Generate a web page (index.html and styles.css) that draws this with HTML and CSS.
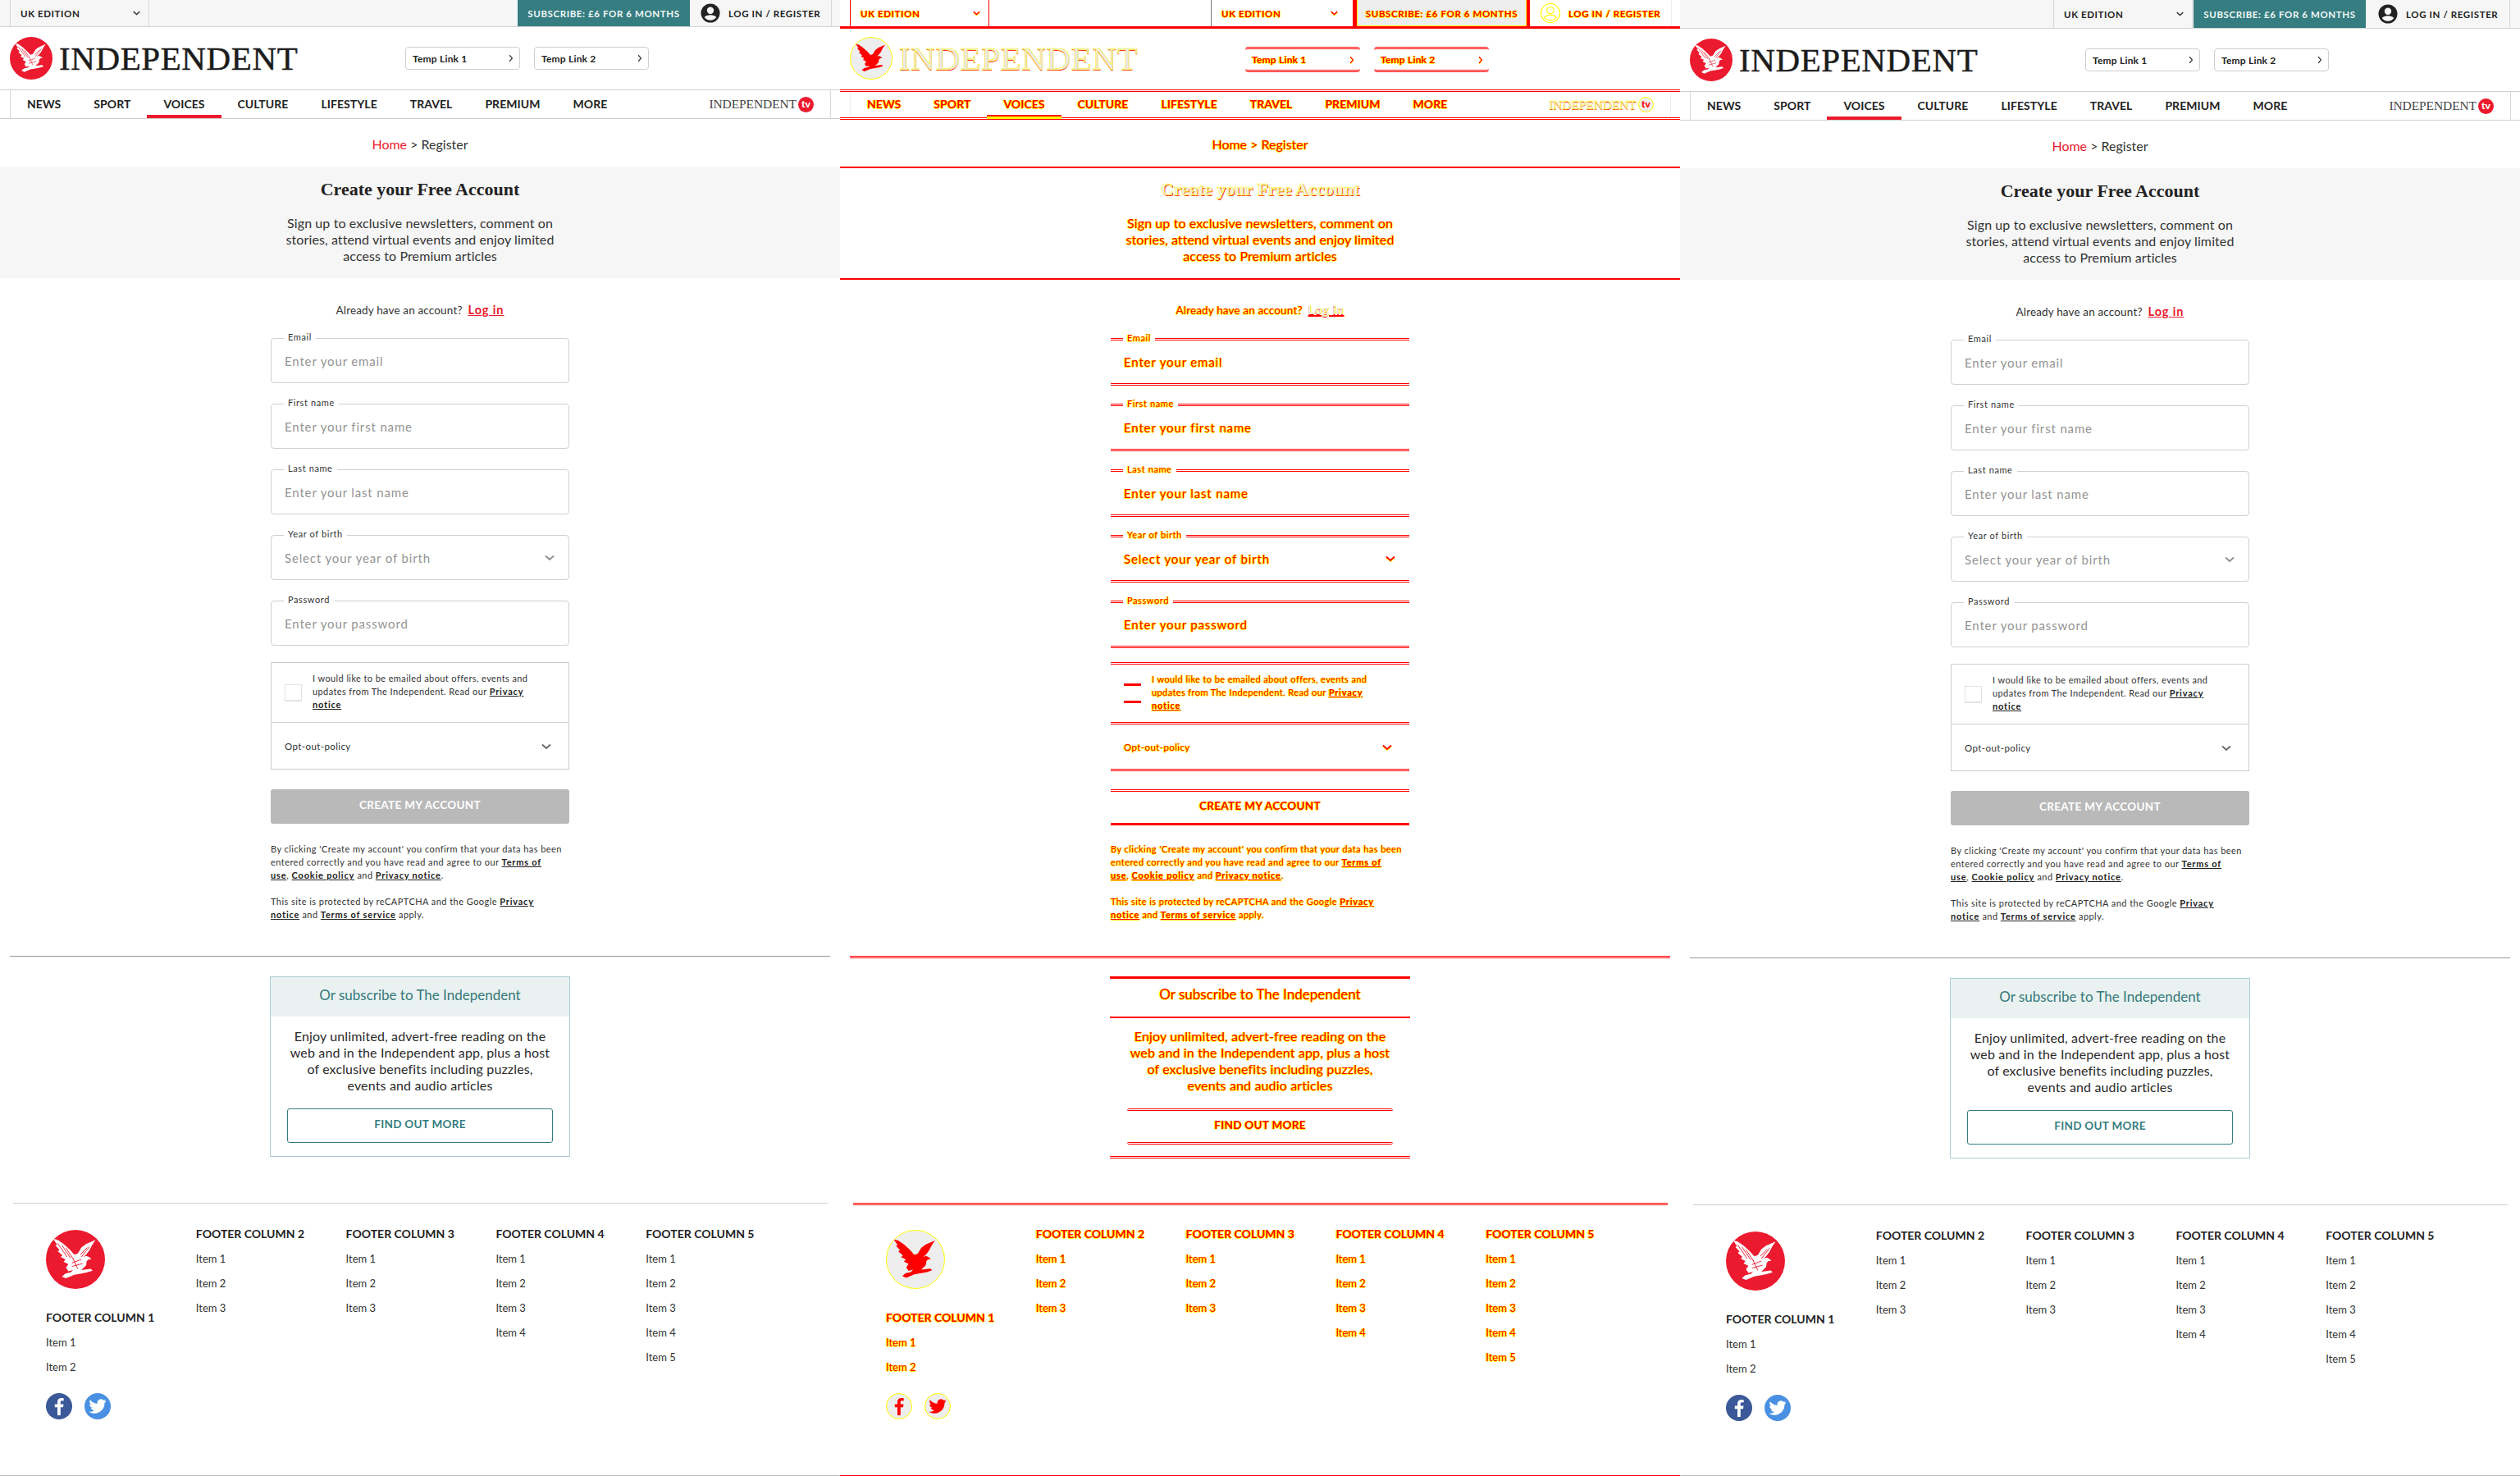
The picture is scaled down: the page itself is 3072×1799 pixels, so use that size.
FILE: index.html
```html
<!DOCTYPE html>
<html lang="en">
<head>
<meta charset="utf-8">
<title>Independent register page comparison</title>
<link rel="stylesheet" href="styles.css">
</head>
<body>
<svg class="sprites" width="0" height="0" aria-hidden="true">
  <symbol id="eagle" viewBox="0 0 100 100">
    <path class="eagle-body" d="M12 15 L20 17 L30 24 L40 33 L48 42 L54 40 L60 30 L68 24 L84 17 L78 26 L74 34 L68 42 L63 46 L68 44 L73 46 L77 50 L72 50 L69 53 L68 60 L62 66 L60 68 L76 66 L79 69 L70 72 L60 74 L48 76 L34 82 L27 79 L33 74 L42 72 L46 68 L38 70 L34 64 L38 58 L30 54 L33 50 L25 46 L28 43 L20 36 L23 34 L16 26 L19 25 Z"/>
    <path class="eagle-hatch" d="M20 23 L36 46 M27 26 L42 48 M34 31 L47 50 M74 28 L60 46 M70 30 L58 42 M44 56 L60 50 M44 62 L62 57 M46 49 L54 66"/>
  </symbol>
  <symbol id="avatar" viewBox="0 0 24 24">
    <path d="M12 .5a11.500 11.500 0 1 0 0 23 11.500 11.500 0 0 0 0-23zm0 4a4.200 4.200 0 1 1 0 8.400 4.200 4.200 0 0 1 0-8.400zm0 16.300c-3 0-5.700-1.500-7.300-3.800 1.300-1.800 4.500-2.700 7.300-2.700s6 .9 7.300 2.700c-1.600 2.300-4.300 3.800-7.300 3.800z" fill-rule="evenodd"/>
  </symbol>
  <symbol id="chev-down" viewBox="0 0 12 8"><path d="M1 1.500 L6 6 L11 1.500" fill="none" stroke="currentColor" stroke-width="1.800"/></symbol>
  <symbol id="chev-right" viewBox="0 0 8 12"><path d="M1.500 1 L6 6 L1.500 11" fill="none" stroke="currentColor" stroke-width="1.500"/></symbol>
  <symbol id="fb" viewBox="0 0 32 32"><path d="M17.800 27V17.200h3.200l.5-3.800h-3.700v-2.400c0-1.100.3-1.800 1.900-1.800h2V6.200c-.4 0-1.500-.2-2.900-.2-2.900 0-4.800 1.700-4.800 4.900v2.500h-3.200v3.800H14V27z"/></symbol>
  <symbol id="tw" viewBox="-5 -6 34 36"><path d="M23.953 4.570a10 10 0 0 1-2.825.775 4.958 4.958 0 0 0 2.163-2.723c-.951.555-2.005.959-3.127 1.184a4.920 4.920 0 0 0-8.384 4.482C7.690 8.095 4.067 6.130 1.640 3.162a4.822 4.822 0 0 0-.666 2.475c0 1.710.870 3.213 2.188 4.096a4.904 4.904 0 0 1-2.228-.616v.06a4.923 4.923 0 0 0 3.946 4.827 4.996 4.996 0 0 1-2.212.085 4.936 4.936 0 0 0 4.604 3.417 9.867 9.867 0 0 1-6.102 2.105c-.39 0-.779-.023-1.170-.067a13.995 13.995 0 0 0 7.557 2.209c9.053 0 13.998-7.496 13.998-13.985 0-.21 0-.42-.015-.63A9.935 9.935 0 0 0 24 4.590z"/></symbol>
</svg>

<div class="stage">

<!-- BEFORE -->
<section class="panel panel-a">
  <div class="topbar">
    <div class="edition"><span>UK EDITION</span><svg class="ico-down"><use href="#chev-down"/></svg></div>
    <a class="subscribe">SUBSCRIBE: £6 FOR 6 MONTHS</a>
    <div class="login"><svg class="avatar"><use href="#avatar"/></svg><span>LOG IN / REGISTER</span></div>
  </div>
  <header class="masthead">
    <svg class="logo-disc"><use href="#eagle"/></svg>
    <div class="wordmark">INDEPENDENT</div>
    <div class="temp-links">
      <a class="temp-link"><span>Temp Link 1</span><svg class="ico-right"><use href="#chev-right"/></svg></a>
      <a class="temp-link"><span>Temp Link 2</span><svg class="ico-right"><use href="#chev-right"/></svg></a>
    </div>
  </header>
  <nav class="nav"><div class="nav-inner">
    <a class="nav-item">NEWS</a><a class="nav-item">SPORT</a><a class="nav-item active">VOICES</a><a class="nav-item">CULTURE</a><a class="nav-item">LIFESTYLE</a><a class="nav-item">TRAVEL</a><a class="nav-item">PREMIUM</a><a class="nav-item">MORE</a>
    <div class="tv"><span class="tv-word">INDEPENDENT</span><span class="tv-badge">tv</span></div>
  </div></nav>
  <div class="crumb"><a class="crumb-home">Home</a>&nbsp;&gt; Register</div>
  <div class="hero">
    <h1>Create your Free Account</h1>
    <p>Sign up to exclusive newsletters, comment on<br>stories, attend virtual events and enjoy limited<br>access to Premium articles</p>
  </div>
  <main class="form">
    <div class="already">Already have an account?<a class="login-link">Log in</a></div>
    <div class="field"><label>Email</label><span class="ph">Enter your email</span></div>
    <div class="field"><label>First name</label><span class="ph">Enter your first name</span></div>
    <div class="field"><label>Last name</label><span class="ph">Enter your last name</span></div>
    <div class="field"><label>Year of birth</label><span class="ph">Select your year of birth</span><svg class="ico-down field-chev"><use href="#chev-down"/></svg></div>
    <div class="field"><label>Password</label><span class="ph">Enter your password</span></div>
    <div class="consent">
      <div class="consent-row"><span class="checkbox"></span><p>I would like to be emailed about offers, events and<br>updates from The Independent. Read our <a>Privacy</a><br><a>notice</a></p></div>
      <div class="opt-row"><span>Opt-out-policy</span><svg class="ico-down"><use href="#chev-down"/></svg></div>
    </div>
    <button class="create">CREATE MY ACCOUNT</button>
    <div class="legal">
      <p>By clicking 'Create my account' you confirm that your data has been<br>entered correctly and you have read and agree to our <a>Terms of</a><br><a>use</a>, <a>Cookie policy</a> and <a>Privacy notice</a>.</p>
      <p>This site is protected by reCAPTCHA and the Google <a>Privacy</a><br><a>notice</a> and <a>Terms of service</a> apply.</p>
    </div>
  </main>
  <hr class="rule">
  <aside class="sub-box">
    <div class="sub-head">Or subscribe to The Independent</div>
    <p>Enjoy unlimited, advert-free reading on the<br>web and in the Independent app, plus a host<br>of exclusive benefits including puzzles,<br>events and audio articles</p>
    <a class="find">FIND OUT MORE</a>
  </aside>
  <footer class="footer">
    <div class="fcol fcol-first">
      <svg class="foot-disc"><use href="#eagle"/></svg>
      <h4>FOOTER COLUMN 1</h4><a>Item 1</a><a>Item 2</a>
      <div class="social"><span class="soc soc-fb"><svg><use href="#fb"/></svg></span><span class="soc soc-tw"><svg><use href="#tw"/></svg></span></div>
    </div>
    <div class="fcol"><h4>FOOTER COLUMN 2</h4><a>Item 1</a><a>Item 2</a><a>Item 3</a></div>
    <div class="fcol"><h4>FOOTER COLUMN 3</h4><a>Item 1</a><a>Item 2</a><a>Item 3</a></div>
    <div class="fcol"><h4>FOOTER COLUMN 4</h4><a>Item 1</a><a>Item 2</a><a>Item 3</a><a>Item 4</a></div>
    <div class="fcol"><h4>FOOTER COLUMN 5</h4><a>Item 1</a><a>Item 2</a><a>Item 3</a><a>Item 4</a><a>Item 5</a></div>
  </footer>
  <div class="page-end"></div>
</section>

<!-- DIFF -->
<section class="panel panel-diff">
  <div class="topbar">
    <div class="edition"><span>UK EDITION</span><svg class="ico-down"><use href="#chev-down"/></svg></div>
    <div class="edition edition-2"><span>UK EDITION</span><svg class="ico-down"><use href="#chev-down"/></svg></div>
    <a class="subscribe">SUBSCRIBE: £6 FOR 6 MONTHS</a>
    <div class="login"><svg class="avatar"><use href="#avatar"/></svg><span>LOG IN / REGISTER</span></div>
  </div>
  <header class="masthead">
    <svg class="logo-disc"><use href="#eagle"/></svg>
    <div class="wordmark">INDEPENDENT</div>
    <div class="temp-links">
      <a class="temp-link"><span>Temp Link 1</span><svg class="ico-right"><use href="#chev-right"/></svg></a>
      <a class="temp-link"><span>Temp Link 2</span><svg class="ico-right"><use href="#chev-right"/></svg></a>
    </div>
  </header>
  <nav class="nav"><div class="nav-inner">
    <a class="nav-item">NEWS</a><a class="nav-item">SPORT</a><a class="nav-item active">VOICES</a><a class="nav-item">CULTURE</a><a class="nav-item">LIFESTYLE</a><a class="nav-item">TRAVEL</a><a class="nav-item">PREMIUM</a><a class="nav-item">MORE</a>
    <div class="tv"><span class="tv-word">INDEPENDENT</span><span class="tv-badge">tv</span></div>
  </div></nav>
  <div class="crumb"><a class="crumb-home">Home</a>&nbsp;&gt; Register</div>
  <div class="hero">
    <h1>Create your Free Account</h1>
    <p>Sign up to exclusive newsletters, comment on<br>stories, attend virtual events and enjoy limited<br>access to Premium articles</p>
  </div>
  <main class="form">
    <div class="already">Already have an account?<a class="login-link">Log in</a></div>
    <div class="field"><label>Email</label><span class="ph">Enter your email</span></div>
    <div class="field"><label>First name</label><span class="ph">Enter your first name</span></div>
    <div class="field"><label>Last name</label><span class="ph">Enter your last name</span></div>
    <div class="field"><label>Year of birth</label><span class="ph">Select your year of birth</span><svg class="ico-down field-chev"><use href="#chev-down"/></svg></div>
    <div class="field"><label>Password</label><span class="ph">Enter your password</span></div>
    <div class="consent">
      <div class="consent-row"><span class="checkbox"></span><p>I would like to be emailed about offers, events and<br>updates from The Independent. Read our <a>Privacy</a><br><a>notice</a></p></div>
      <div class="opt-row"><span>Opt-out-policy</span><svg class="ico-down"><use href="#chev-down"/></svg></div>
    </div>
    <button class="create">CREATE MY ACCOUNT</button>
    <div class="legal">
      <p>By clicking 'Create my account' you confirm that your data has been<br>entered correctly and you have read and agree to our <a>Terms of</a><br><a>use</a>, <a>Cookie policy</a> and <a>Privacy notice</a>.</p>
      <p>This site is protected by reCAPTCHA and the Google <a>Privacy</a><br><a>notice</a> and <a>Terms of service</a> apply.</p>
    </div>
  </main>
  <hr class="rule">
  <aside class="sub-box">
    <div class="sub-head">Or subscribe to The Independent</div>
    <p>Enjoy unlimited, advert-free reading on the<br>web and in the Independent app, plus a host<br>of exclusive benefits including puzzles,<br>events and audio articles</p>
    <a class="find">FIND OUT MORE</a>
  </aside>
  <footer class="footer">
    <div class="fcol fcol-first">
      <svg class="foot-disc"><use href="#eagle"/></svg>
      <h4>FOOTER COLUMN 1</h4><a>Item 1</a><a>Item 2</a>
      <div class="social"><span class="soc soc-fb"><svg><use href="#fb"/></svg></span><span class="soc soc-tw"><svg><use href="#tw"/></svg></span></div>
    </div>
    <div class="fcol"><h4>FOOTER COLUMN 2</h4><a>Item 1</a><a>Item 2</a><a>Item 3</a></div>
    <div class="fcol"><h4>FOOTER COLUMN 3</h4><a>Item 1</a><a>Item 2</a><a>Item 3</a></div>
    <div class="fcol"><h4>FOOTER COLUMN 4</h4><a>Item 1</a><a>Item 2</a><a>Item 3</a><a>Item 4</a></div>
    <div class="fcol"><h4>FOOTER COLUMN 5</h4><a>Item 1</a><a>Item 2</a><a>Item 3</a><a>Item 4</a><a>Item 5</a></div>
  </footer>
  <div class="page-end"></div>
</section>

<!-- AFTER -->
<section class="panel panel-b">
  <div class="topbar">
    <div class="edition"><span>UK EDITION</span><svg class="ico-down"><use href="#chev-down"/></svg></div>
    <a class="subscribe">SUBSCRIBE: £6 FOR 6 MONTHS</a>
    <div class="login"><svg class="avatar"><use href="#avatar"/></svg><span>LOG IN / REGISTER</span></div>
  </div>
  <header class="masthead">
    <svg class="logo-disc"><use href="#eagle"/></svg>
    <div class="wordmark">INDEPENDENT</div>
    <div class="temp-links">
      <a class="temp-link"><span>Temp Link 1</span><svg class="ico-right"><use href="#chev-right"/></svg></a>
      <a class="temp-link"><span>Temp Link 2</span><svg class="ico-right"><use href="#chev-right"/></svg></a>
    </div>
  </header>
  <nav class="nav"><div class="nav-inner">
    <a class="nav-item">NEWS</a><a class="nav-item">SPORT</a><a class="nav-item active">VOICES</a><a class="nav-item">CULTURE</a><a class="nav-item">LIFESTYLE</a><a class="nav-item">TRAVEL</a><a class="nav-item">PREMIUM</a><a class="nav-item">MORE</a>
    <div class="tv"><span class="tv-word">INDEPENDENT</span><span class="tv-badge">tv</span></div>
  </div></nav>
  <div class="crumb"><a class="crumb-home">Home</a>&nbsp;&gt; Register</div>
  <div class="hero">
    <h1>Create your Free Account</h1>
    <p>Sign up to exclusive newsletters, comment on<br>stories, attend virtual events and enjoy limited<br>access to Premium articles</p>
  </div>
  <main class="form">
    <div class="already">Already have an account?<a class="login-link">Log in</a></div>
    <div class="field"><label>Email</label><span class="ph">Enter your email</span></div>
    <div class="field"><label>First name</label><span class="ph">Enter your first name</span></div>
    <div class="field"><label>Last name</label><span class="ph">Enter your last name</span></div>
    <div class="field"><label>Year of birth</label><span class="ph">Select your year of birth</span><svg class="ico-down field-chev"><use href="#chev-down"/></svg></div>
    <div class="field"><label>Password</label><span class="ph">Enter your password</span></div>
    <div class="consent">
      <div class="consent-row"><span class="checkbox"></span><p>I would like to be emailed about offers, events and<br>updates from The Independent. Read our <a>Privacy</a><br><a>notice</a></p></div>
      <div class="opt-row"><span>Opt-out-policy</span><svg class="ico-down"><use href="#chev-down"/></svg></div>
    </div>
    <button class="create">CREATE MY ACCOUNT</button>
    <div class="legal">
      <p>By clicking 'Create my account' you confirm that your data has been<br>entered correctly and you have read and agree to our <a>Terms of</a><br><a>use</a>, <a>Cookie policy</a> and <a>Privacy notice</a>.</p>
      <p>This site is protected by reCAPTCHA and the Google <a>Privacy</a><br><a>notice</a> and <a>Terms of service</a> apply.</p>
    </div>
  </main>
  <hr class="rule">
  <aside class="sub-box">
    <div class="sub-head">Or subscribe to The Independent</div>
    <p>Enjoy unlimited, advert-free reading on the<br>web and in the Independent app, plus a host<br>of exclusive benefits including puzzles,<br>events and audio articles</p>
    <a class="find">FIND OUT MORE</a>
  </aside>
  <footer class="footer">
    <div class="fcol fcol-first">
      <svg class="foot-disc"><use href="#eagle"/></svg>
      <h4>FOOTER COLUMN 1</h4><a>Item 1</a><a>Item 2</a>
      <div class="social"><span class="soc soc-fb"><svg><use href="#fb"/></svg></span><span class="soc soc-tw"><svg><use href="#tw"/></svg></span></div>
    </div>
    <div class="fcol"><h4>FOOTER COLUMN 2</h4><a>Item 1</a><a>Item 2</a><a>Item 3</a></div>
    <div class="fcol"><h4>FOOTER COLUMN 3</h4><a>Item 1</a><a>Item 2</a><a>Item 3</a></div>
    <div class="fcol"><h4>FOOTER COLUMN 4</h4><a>Item 1</a><a>Item 2</a><a>Item 3</a><a>Item 4</a></div>
    <div class="fcol"><h4>FOOTER COLUMN 5</h4><a>Item 1</a><a>Item 2</a><a>Item 3</a><a>Item 4</a><a>Item 5</a></div>
  </footer>
  <div class="page-end"></div>
</section>

</div>
</body>
</html>
```
FILE: styles.css
```css
* { box-sizing: border-box; }
html, body { margin: 0; padding: 0; background: #fff; }
body { font-family: Lato, "Open Sans", sans-serif; color: #222; overflow: hidden; }
a { color: inherit; }
p, h1, h4 { margin: 0; }
.sprites { position: absolute; }

.stage { display: grid; grid-template-columns: repeat(3, 1024px); width: 3072px; height: 1799px; }
.panel { display: flex; flex-direction: column; height: 1799px; overflow: hidden; }

/* top bar */
.topbar { display: flex; height: 33px; background: #f6f6f6; border-bottom: 1px solid #d4d4d4; padding-right: 10px; font-size: 11.5px; font-weight: 700; letter-spacing: .6px; white-space: nowrap; }
.edition { display: flex; align-items: center; justify-content: space-between; width: 170px; margin-left: 12px; padding: 0 10px 0 12px; border-left: 1px solid #d8d8d8; border-right: 1px solid #d8d8d8; }
.ico-down { width: 9px; height: 6px; color: #333; flex: none; }
.subscribe { display: flex; align-items: center; justify-content: center; width: 210px; margin-left: auto; background: #357d80; color: #f2f7f7; }
.login { display: flex; align-items: center; gap: 10px; padding: 0 0 0 13px; border-right: 1px solid #d8d8d8; width: 173px; color: #222; }
.avatar { width: 24px; height: 24px; fill: #222; flex: none; }

.panel-b .topbar { height: 35px; padding-right: 12px; }
.panel-b .edition { margin-left: auto; }
.panel-b .subscribe { margin-left: 1px; }
.panel-b .login { padding-left: 15px; width: 176px; }

/* masthead */
.masthead { display: flex; align-items: center; height: 76px; padding-left: 12px; }
.logo-disc { width: 52px; height: 52px; border-radius: 50%; background: #ec1a2e; fill: #fff; stroke: #ec1a2e; flex: none; }
.eagle-body { stroke-width: 0; }
.eagle-hatch { fill: none; stroke-width: 1.3; }
.wordmark { width: 292px; margin-left: 8px; font-family: "Liberation Serif", serif; font-size: 41px; line-height: 1; letter-spacing: .6px; -webkit-text-stroke: .45px #1c1c1c; color: #1c1c1c; white-space: nowrap; }
.temp-links { display: flex; gap: 17px; margin-left: 130px; }
.temp-link { display: flex; align-items: center; justify-content: space-between; width: 140px; height: 28px; padding: 0 7px 0 8px; border: 1px solid #cfcfcf; border-radius: 4px; font-size: 12px; font-weight: 700; letter-spacing: .2px; }
.ico-right { width: 6px; height: 10px; color: #333; }

/* nav */
.nav { border-top: 1px solid #d0d0d0; border-bottom: 1px solid #d0d0d0; height: 36px; }
.nav-inner { display: flex; height: 34px; margin: 0 11px 0 12px; border-left: 1px solid #d8d8d8; border-right: 1px solid #d8d8d8; }
.nav-item { display: flex; align-items: center; padding: 2px 20px 0; height: 34px; border-bottom: 4px solid transparent; font-size: 14px; font-weight: 700; letter-spacing: .05px; color: #222; }
.nav-item.active { border-bottom-color: #ec1a2e; }
.tv { display: flex; align-items: center; margin-left: auto; padding-right: 20px; gap: 2px; }
.tv-word { font-family: "Liberation Serif", serif; font-size: 15.5px; color: #444; letter-spacing: -.1px; }
.tv-badge { display: flex; align-items: center; justify-content: center; width: 19px; height: 19px; border-radius: 50%; background: #ec1a2e; color: #fff; font-size: 12px; font-weight: 900; padding-bottom: 2px; }

/* crumb + hero */
.crumb { display: flex; align-items: center; justify-content: center; height: 58px; padding-top: 3px; font-size: 16px; color: #333; }
.crumb-home { color: #ec1a2e; }
.hero { height: 136px; padding-top: 16px; background: #f6f6f6; text-align: center; }
.hero h1 { font-family: "Liberation Serif", serif; font-size: 22px; line-height: 24px; font-weight: 700; color: #222; }
.hero p { margin-top: 19px; font-size: 16px; line-height: 20px; letter-spacing: .1px; color: #333; }

/* form */
.form { width: 364px; margin: 0 auto; padding-top: 30px; }
.already { display: flex; justify-content: center; align-items: baseline; gap: 7px; height: 18px; line-height: 18px; font-size: 13.5px; letter-spacing: .15px; color: #333; margin-bottom: 25px; }
.login-link { font-size: 14.5px; font-weight: 700; letter-spacing: .9px; color: #ec1a2e; text-decoration: underline; }
.field { position: relative; display: flex; align-items: center; justify-content: space-between; height: 55px; margin-bottom: 25px; padding: 0 16px; border: 1px solid #d0d0d0; border-radius: 4px; }
.field label { position: absolute; left: 15px; top: -9px; padding: 0 5px; background: #fff; font-size: 11px; line-height: 14px; letter-spacing: .6px; color: #333; }
.ph { font-size: 15px; letter-spacing: .85px; color: #949494; }
.field-chev { width: 12px; height: 8px; color: #8c8c8c; margin-right: 1px; }
.consent { margin-top: -5px; border: 1px solid #cdcdcd; }
.consent-row { display: flex; align-items: center; height: 73px; padding: 0 16px; border-bottom: 1px solid #d0d0d0; }
.checkbox { flex: none; width: 21px; height: 21px; border: 1px solid #e3e3e3; border-bottom-width: 2px; background: #fff; }
.consent-row p { margin: 0 0 3px 13px; font-size: 11px; line-height: 16px; letter-spacing: .4px; color: #333; white-space: nowrap; }
.consent-row a, .legal a { font-weight: 700; text-decoration: underline; letter-spacing: .8px; color: #222; }
.opt-row { display: flex; align-items: center; justify-content: space-between; height: 56px; padding: 0 21px 0 16px; font-size: 11.5px; letter-spacing: .4px; color: #333; }
.opt-row .ico-down { width: 12px; height: 8px; color: #666; margin-top: 2px; }
.create { display: block; width: 100%; height: 42px; margin-top: 24px; padding: 0 0 4px; border: 0; border-radius: 3px; background: #b9b9b9; color: #fff; font-family: inherit; font-size: 13.5px; font-weight: 700; letter-spacing: .3px; }
.legal { margin-top: 23px; font-size: 11px; line-height: 16px; letter-spacing: .45px; color: #333; white-space: nowrap; }
.legal p + p { margin-top: 16px; }

.rule { width: 1000px; height: 1px; margin: 42px 0 24px 12px; border: 0; background: #999; flex: none; }

/* subscribe box */
.sub-box { display: flex; flex-direction: column; align-items: center; width: 366px; height: 220px; margin: 0 auto; border: 1px solid #a9ced1; text-align: center; flex: none; }
.sub-head { align-self: stretch; height: 48px; padding-top: 10px; background: #e9f2f1; font-size: 17px; line-height: 24px; color: #35787a; }
.sub-box p { margin-top: 14px; font-size: 16px; line-height: 20px; letter-spacing: .15px; color: #2a2a2a; }
.find { display: flex; align-items: center; justify-content: center; width: 324px; height: 42px; margin-top: 18px; padding-bottom: 4px; border: 1px solid #357d80; border-radius: 3px; font-size: 13.5px; font-weight: 700; letter-spacing: .3px; color: #357d80; }

/* footer */
.footer { display: grid; grid-template-columns: repeat(5, 182.8px); width: 993px; margin: 56px 0 0 16px; padding: 27px 0 0 40px; border-top: 1px solid #d0d0d0; align-items: start; }
.fcol { display: flex; flex-direction: column; font-size: 13px; line-height: 20px; color: #333; }
.fcol h4 { font-size: 14px; line-height: 20px; font-weight: 700; color: #222; white-space: nowrap; }
.fcol a { margin-top: 10px; }
.fcol-first { padding-top: 5px; }
.foot-disc { width: 72px; height: 72px; border-radius: 50%; background: #ec1a2e; fill: #fff; stroke: #ec1a2e; margin-bottom: 25px; }
.social { display: flex; gap: 15px; margin-top: 22px; }
.soc { width: 32px; height: 32px; border-radius: 50%; display: block; }
.soc svg { display: block; width: 32px; height: 32px; fill: #fff; }
.soc-fb { background: #3b5998; }
.soc-tw { background: #4a90e2; }
.page-end { margin-top: auto; height: 1px; background: #bbb; flex: none; }

/* ---------- diff panel ---------- */
.panel-diff a, .panel-diff label, .panel-diff .ph, .panel-diff h4, .panel-diff p, .panel-diff .crumb, .panel-diff .already, .panel-diff .opt-row, .panel-diff .legal, .panel-diff .fcol, .panel-diff .edition, .panel-diff .login, .panel-diff .nav-item, .panel-diff .hero p, .panel-diff .sub-box p, .panel-diff .legal a, .panel-diff .consent-row a, .panel-diff .fcol a { color: #f00; text-shadow: 1px 0 0 #ff0, -1px 0 0 #ff0, 0 1px 0 #ff0; }
.panel-diff label { background: #fff; }
.panel-diff .topbar { background: #fff; border-bottom: 1px solid #f00; box-shadow: 0 2px 0 #f00; }
.panel-diff .edition { border-color: #f00; flex: none; }
.panel-diff .ico-down, .panel-diff .ico-right, .panel-diff .field-chev, .panel-diff .opt-row .ico-down { color: #f00; filter: drop-shadow(0 1px 0 #ff0); }
.panel-diff .edition-2 { width: 173px; margin-left: auto; border-left: 1px solid #777; border-right: 0; padding-right: 18px; }
.panel-diff .subscribe { width: 216px; margin-left: 0; background: #eee; border-left: 5px solid #f00; border-right: 4px solid #f00; box-shadow: inset 1px 0 0 #ff0, inset -1px 0 0 #ff0, inset 0 -1px 0 #ff0; }
.panel-diff .login { border-right-color: #eee; }
.panel-diff .avatar { fill: #fff; stroke: #ff0; stroke-width: 1.2; }
.panel-diff .logo-disc, .panel-diff .foot-disc { background: #eee; border: 1px solid #ff0; fill: #f00; stroke: #f00; }
.panel-diff .eagle-hatch { stroke: #eee; }
.panel-diff .wordmark { color: #e9e9e9; -webkit-text-stroke: .5px #ff0; text-shadow: 0 1px 0 #f00; }
.panel-diff .temp-link { border: 0; border-top: 3px double #f00; border-bottom: 3px double #f00; height: 31px; margin-bottom: -3px; }
.panel-diff .nav { border-top: 3px double #f00; border-bottom: 3px double #f00; height: 37px; margin-bottom: -1px; }
.panel-diff .nav-inner { height: 31px; border-color: #eee; }
.panel-diff .nav-item { height: 30px; padding-top: 1px; border-bottom: 2px solid transparent; }
.panel-diff .nav-item.active { border-bottom-color: #f00; box-shadow: 0 3px 0 #ff0; }
.panel-diff .tv-word { color: #eee; -webkit-text-stroke: .4px #ff0; text-shadow: 0 1px 0 #f00; }
.panel-diff .tv-badge { background: #eee; border: 1px solid #ff0; color: #f00; }
.panel-diff .hero { background: #fff; border-top: 2px solid #f00; border-bottom: 2px solid #f00; height: 138px; margin-bottom: -2px; padding-top: 14px; }
.panel-diff .hero h1 { color: #eee; -webkit-text-stroke: .5px #ff0; text-shadow: 1px 1px 0 #f00; }
.panel-diff .login-link { color: #eee; text-shadow: 1px 0 0 #ff0, 0 1px 0 #f00; text-decoration-color: #f00; }
.panel-diff .field { border: 0; border-top: 3px double #f00; border-bottom: 3px double #f00; height: 58px; margin-bottom: 22px; border-radius: 0; }
.panel-diff .field label { top: -10px; }
.panel-diff .consent { border: 0; border-top: 3px double #f00; border-bottom: 3px double #f00; }
.panel-diff .consent-row { border-bottom: 3px double #f00; height: 73px; }
.panel-diff .checkbox { border: 0; border-top: 3px solid #f00; border-bottom: 3px solid #f00; height: 24px; }
.panel-diff .opt-row { height: 54px; }
.panel-diff .create { background: #fff; color: #f00; text-shadow: 1px 0 0 #ff0, -1px 0 0 #ff0, 0 1px 0 #ff0; border-top: 3px double #f00; border-bottom: 3px solid #f00; height: 44px; margin-top: 22px; border-radius: 0; }
.panel-diff .legal { margin-top: 21px; }
.panel-diff .rule { height: 3px; background: none; border-top: 3px double #f00; margin-bottom: 22px; }
.panel-diff .sub-box { border: 0; border-top: 3px solid #f00; border-bottom: 3px double #f00; height: 222px; }
.panel-diff .sub-head { background: #fff; color: #f00; text-shadow: 1px 0 0 #ff0, -1px 0 0 #ff0, 0 1px 0 #ff0; border-bottom: 2px solid #f00; height: 48px; padding-top: 7px; }
.panel-diff .sub-box p { margin-top: 12px; }
.panel-diff .find { border: 0; border-top: 3px double #f00; border-bottom: 3px double #f00; height: 44px; }
.panel-diff .footer { border-top: 3px double #f00; padding-top: 25px; margin-top: 54px; }
.panel-diff .soc { background: #eee; border: 1px solid #ff0; }
.panel-diff .soc svg { fill: #f00; margin: -1px; }
.panel-diff .page-end { background: #f00; }
```
